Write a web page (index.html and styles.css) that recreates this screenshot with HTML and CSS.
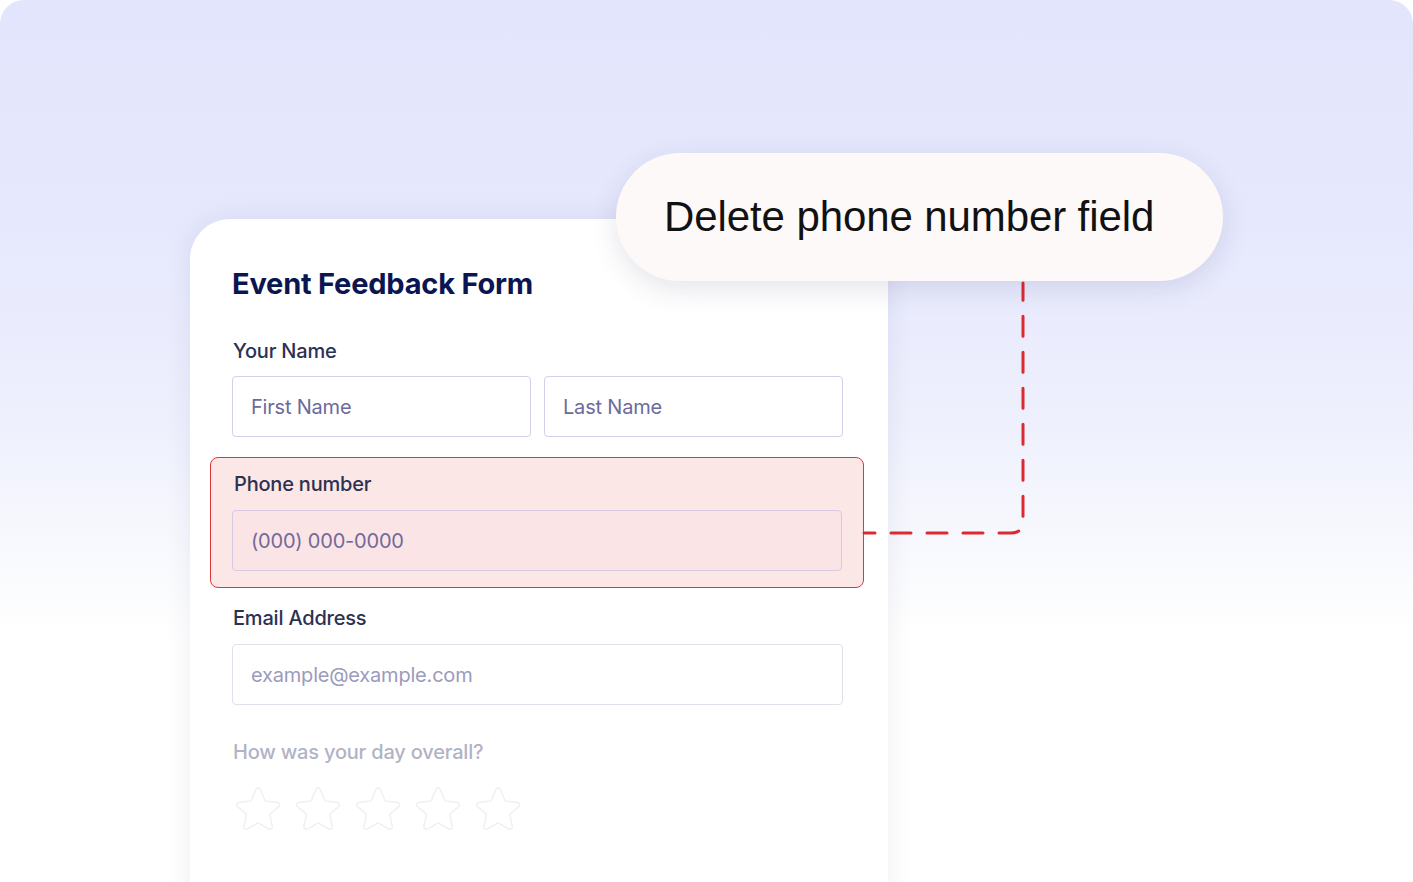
FILE: index.html
```html
<!DOCTYPE html>
<html lang="en">
<head>
<meta charset="utf-8">
<title>Event Feedback Form</title>
<link rel="stylesheet" href="styles.css">
</head>
<body>
<div class="stage">
  <div class="card">
    <h1 class="title">Event Feedback Form</h1>
    <div class="field">
      <div class="label">Your Name</div>
      <div class="row">
        <div class="input">First Name</div>
        <div class="input">Last Name</div>
      </div>
    </div>
    <div class="field highlight">
      <div class="label">Phone number</div>
      <div class="input input-phone">(000) 000-0000</div>
    </div>
    <div class="field">
      <div class="label">Email Address</div>
      <div class="input input-email">example@example.com</div>
    </div>
    <div class="field faded">
      <div class="label label-faded">How was your day overall?</div>
      <div class="stars">
        <svg class="star" viewBox="0 0 48 48"><path d="M24 3.5c1.2 0 1.9 1 2.4 2.2l4.3 10.3c.3.7 1 1.2 1.8 1.3l10.6.9c2.4.2 3.3 3 1.5 4.5l-8.1 7c-.6.5-.8 1.3-.6 2l2.4 10.4c.6 2.3-1.9 4-3.9 2.8l-9.2-5.6a2 2 0 0 0-2.2 0l-9.2 5.6c-2 1.2-4.5-.5-3.9-2.8l2.4-10.4c.2-.7 0-1.5-.6-2l-8.1-7c-1.8-1.5-.9-4.3 1.5-4.5l10.6-.9c.8-.1 1.5-.6 1.8-1.3l4.3-10.3c.5-1.2 1.2-2.2 2.4-2.2z"/></svg>
        <svg class="star" viewBox="0 0 48 48"><path d="M24 3.5c1.2 0 1.9 1 2.4 2.2l4.3 10.3c.3.7 1 1.2 1.8 1.3l10.6.9c2.4.2 3.3 3 1.5 4.5l-8.1 7c-.6.5-.8 1.3-.6 2l2.4 10.4c.6 2.3-1.9 4-3.9 2.8l-9.2-5.6a2 2 0 0 0-2.2 0l-9.2 5.6c-2 1.2-4.5-.5-3.9-2.8l2.4-10.4c.2-.7 0-1.5-.6-2l-8.1-7c-1.8-1.5-.9-4.3 1.5-4.5l10.6-.9c.8-.1 1.5-.6 1.8-1.3l4.3-10.3c.5-1.2 1.2-2.2 2.4-2.2z"/></svg>
        <svg class="star" viewBox="0 0 48 48"><path d="M24 3.5c1.2 0 1.9 1 2.4 2.2l4.3 10.3c.3.7 1 1.2 1.8 1.3l10.6.9c2.4.2 3.3 3 1.5 4.5l-8.1 7c-.6.5-.8 1.3-.6 2l2.4 10.4c.6 2.3-1.9 4-3.9 2.8l-9.2-5.6a2 2 0 0 0-2.2 0l-9.2 5.6c-2 1.2-4.5-.5-3.9-2.8l2.4-10.4c.2-.7 0-1.5-.6-2l-8.1-7c-1.8-1.5-.9-4.3 1.5-4.5l10.6-.9c.8-.1 1.5-.6 1.8-1.3l4.3-10.3c.5-1.2 1.2-2.2 2.4-2.2z"/></svg>
        <svg class="star" viewBox="0 0 48 48"><path d="M24 3.5c1.2 0 1.9 1 2.4 2.2l4.3 10.3c.3.7 1 1.2 1.8 1.3l10.6.9c2.4.2 3.3 3 1.5 4.5l-8.1 7c-.6.5-.8 1.3-.6 2l2.4 10.4c.6 2.3-1.9 4-3.9 2.8l-9.2-5.6a2 2 0 0 0-2.2 0l-9.2 5.6c-2 1.2-4.5-.5-3.9-2.8l2.4-10.4c.2-.7 0-1.5-.6-2l-8.1-7c-1.8-1.5-.9-4.3 1.5-4.5l10.6-.9c.8-.1 1.5-.6 1.8-1.3l4.3-10.3c.5-1.2 1.2-2.2 2.4-2.2z"/></svg>
        <svg class="star" viewBox="0 0 48 48"><path d="M24 3.5c1.2 0 1.9 1 2.4 2.2l4.3 10.3c.3.7 1 1.2 1.8 1.3l10.6.9c2.4.2 3.3 3 1.5 4.5l-8.1 7c-.6.5-.8 1.3-.6 2l2.4 10.4c.6 2.3-1.9 4-3.9 2.8l-9.2-5.6a2 2 0 0 0-2.2 0l-9.2 5.6c-2 1.2-4.5-.5-3.9-2.8l2.4-10.4c.2-.7 0-1.5-.6-2l-8.1-7c-1.8-1.5-.9-4.3 1.5-4.5l10.6-.9c.8-.1 1.5-.6 1.8-1.3l4.3-10.3c.5-1.2 1.2-2.2 2.4-2.2z"/></svg>
      </div>
    </div>
  </div>

  <svg class="connector" width="1413" height="882" viewBox="0 0 1413 882">
    <path d="M864 533 H1011 Q1023 533 1023 521 V283" fill="none" stroke="#dc2a31" stroke-width="3" stroke-dasharray="20 16" stroke-dashoffset="9" stroke-linecap="round"/>
  </svg>

  <div class="tooltip">Delete phone number field</div>
</div>
</body>
</html>
```

FILE: styles.css
```css
* { box-sizing: border-box; }

html, body {
  margin: 0;
  padding: 0;
  background: #ffffff;
}

body {
  width: 1413px;
  height: 882px;
  overflow: hidden;
  font-family: Inter, "Noto Sans", sans-serif;
}

.stage {
  position: relative;
  width: 1413px;
  height: 882px;
  border-radius: 24px 24px 0 0;
  background: linear-gradient(180deg, #e3e5fc 0%, #e6e8fd 25%, #eef0fd 48%, #f8f9fe 62%, #ffffff 72%);
  padding: 219px 0 0 190px;
  overflow: hidden;
}

.card {
  width: 698px;
  height: 700px;
  background: #ffffff;
  border-radius: 40px 40px 0 0;
  box-shadow: 0 0 28px rgba(30, 35, 80, 0.08);
  padding: 47px 45px 0 42px;
  display: flex;
  flex-direction: column;
}

.title {
  margin: 0 0 37px 0;
  font-size: 29px;
  line-height: 36px;
  font-weight: 700;
  color: #0a1551;
  letter-spacing: -0.2px;
}

.field {
  display: flex;
  flex-direction: column;
  gap: 13px;
}

.label {
  font-size: 20px;
  line-height: 24px;
  font-weight: 500;
  color: #2c3150;
  padding-left: 1px;
  letter-spacing: -0.2px;
}

.row {
  display: flex;
  gap: 13px;
}

.input {
  flex: 1;
  height: 61px;
  border: 1.5px solid #cfd0ea;
  border-radius: 4px;
  background: #ffffff;
  display: flex;
  align-items: center;
  padding-left: 18px;
  font-size: 20px;
  color: #6b6a9c;
  letter-spacing: -0.2px;
}

.highlight {
  margin: 20px -21px 0 -22px;
  padding: 15px 21px 16px 21px;
  background: #fce7e7;
  border: 1.5px solid #e0353d;
  border-radius: 8px;
  gap: 14px;
}

.highlight .label { margin-top: -1px; padding-left: 2px; }

.input-phone {
  flex: none;
  background: #fbe4e6;
  border-color: #d8c8e4;
  color: #726a9a;
}

.highlight + .field {
  margin-top: 18px;
  gap: 14px;
}

.input-email {
  flex: none;
  border-color: #dfe1ea;
  color: #9b9bbb;
}

.faded {
  margin-top: 35px;
  gap: 20px;
}

.label-faded {
  color: #b1b3c5;
  font-weight: 500;
}

.stars {
  display: flex;
  gap: 12px;
  padding-left: 2px;
}

.star {
  width: 48px;
  height: 48px;
  fill: none;
  stroke: #f0f0f4;
  stroke-width: 1.5;
}

.connector {
  position: absolute;
  left: 0;
  top: 0;
  pointer-events: none;
}

.tooltip {
  position: absolute;
  left: 616px;
  top: 153px;
  width: 607px;
  height: 128px;
  border-radius: 64px;
  background: #fdf9f8;
  box-shadow: 0 8px 28px rgba(40, 40, 90, 0.12);
  display: flex;
  align-items: center;
  padding-left: 48px;
  font-family: "Liberation Sans", Arial, sans-serif;
  font-size: 42px;
  color: #111111;
  letter-spacing: -0.1px;
}
```
